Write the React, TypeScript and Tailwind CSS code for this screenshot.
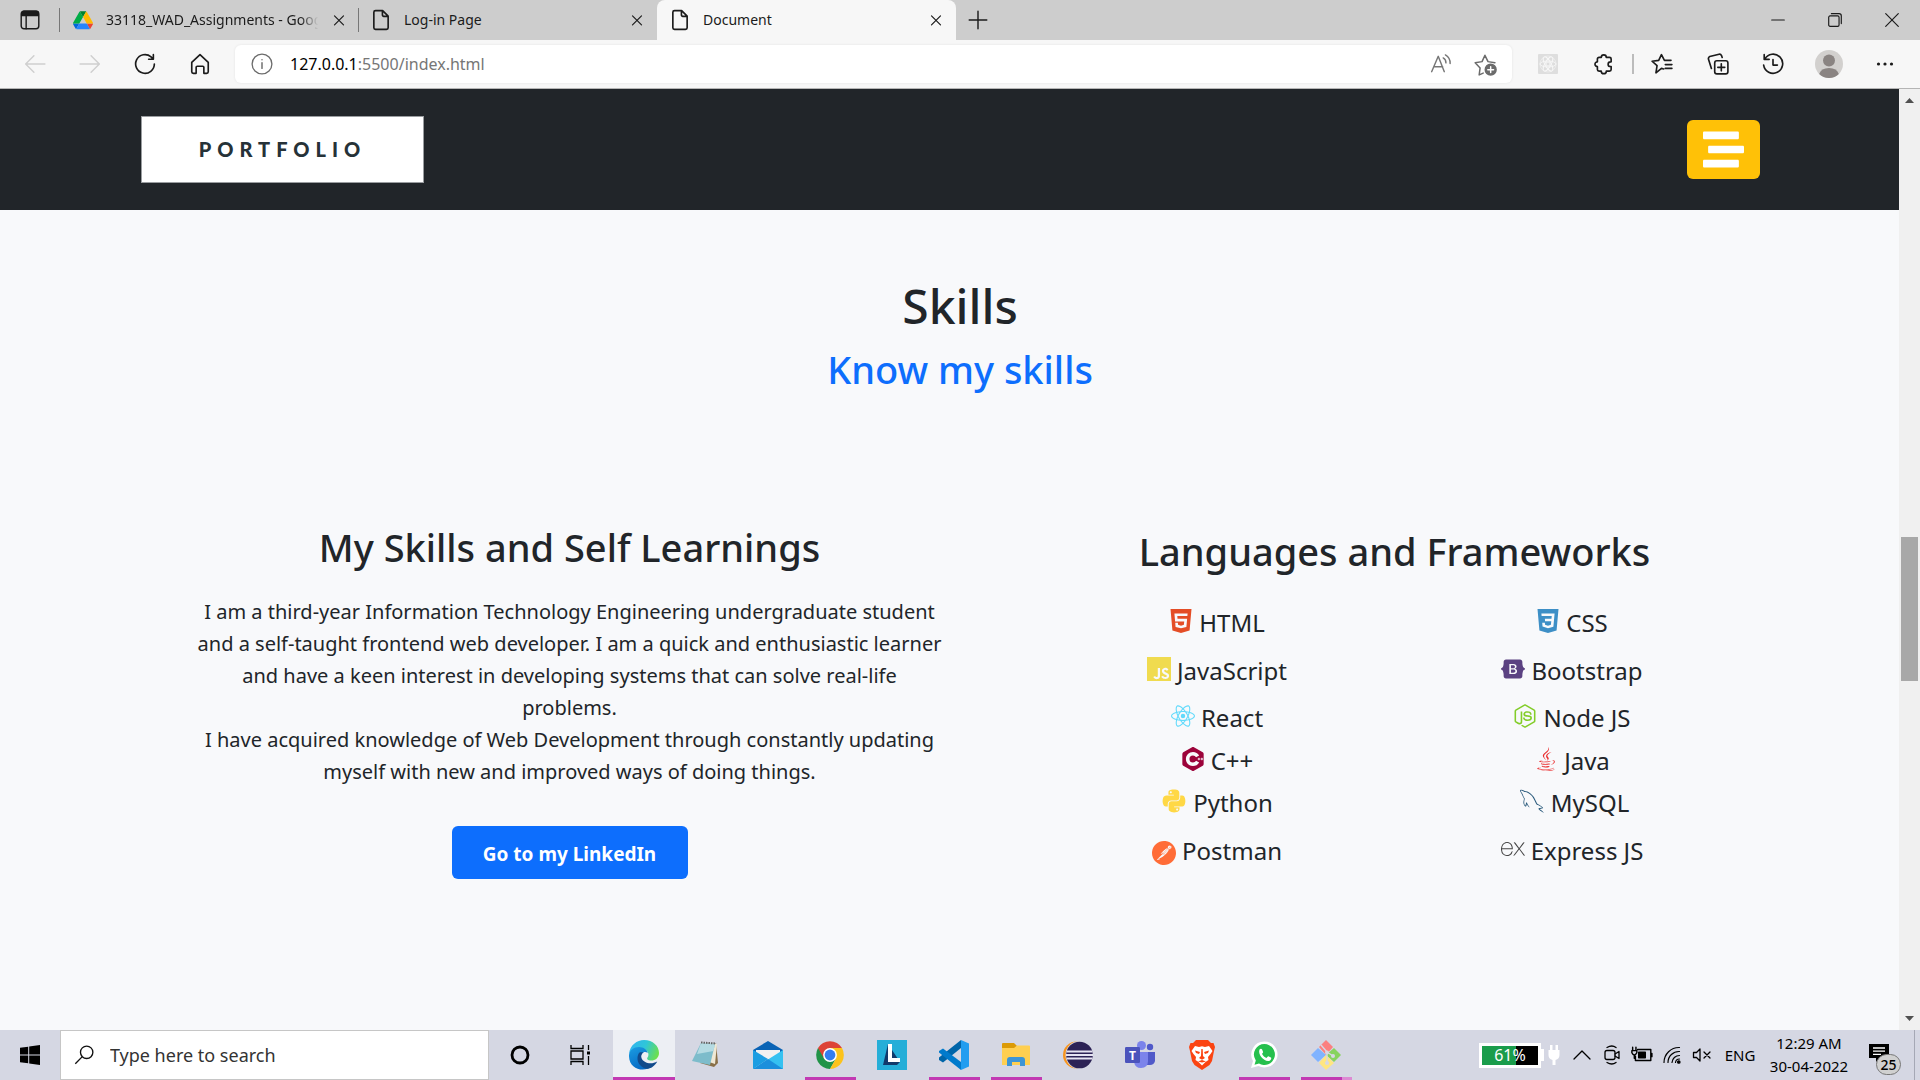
import React from "react";
import { FaNodeJs, FaJava, FaPython, FaStream } from "react-icons/fa";
import { SiHtml5, SiJavascript, SiReact, SiBootstrap, SiCplusplus, SiPostman, SiExpress } from "react-icons/si";
import { DiMysql } from "react-icons/di";

type IconProps = { size?: number; color?: string; children?: React.ReactNode };

/** Outline icon on a 20 unit grid. */
function Line({ size = 20, color = "#1b1b1b", children }: IconProps) {
  return (
    <svg width={size} height={size} viewBox="0 0 20 20" fill="none" stroke={color} strokeWidth="1.3" strokeLinecap="round" strokeLinejoin="round" aria-hidden="true">
      {children}
    </svg>
  );
}

const CloseIcon = ({ size = 20 }: { size?: number }) => (
  <Line size={size}>
    <path d="M5 5.5l10 10M15 5.5l-10 10" />
  </Line>
);

const PageIcon = () => (
  <Line size={22}>
    <path d="M5 1.5h6.5l5 5V17a1.5 1.5 0 0 1-1.5 1.5H5A1.5 1.5 0 0 1 3.500 17V3A1.500 1.500 0 0 1 5 1.500zM11.300 1.700V5.500a1.200 1.200 0 0 0 1.200 1.200h3.800" strokeWidth="1.5" />
  </Line>
);

const DriveIcon = () => (
  <svg width="20" height="20" viewBox="0 0 87 80" aria-hidden="true">
    <path fill="#0066da" d="M6.600 68.850l3.850 6.650c.8 1.400 1.950 2.500 3.300 3.300l13.750-23.800H0c0 1.550.4 3.100 1.200 4.500z" />
    <path fill="#00ac47" d="M43.650 27L29.900 3.200c-1.350.8-2.500 1.900-3.300 3.300L1.200 50.500C.4 51.900 0 53.450 0 55h27.500z" />
    <path fill="#ea4335" d="M73.550 78.800c1.350-.8 2.500-1.900 3.300-3.300l1.600-2.750 7.650-13.250c.8-1.400 1.200-2.950 1.200-4.500H59.800l5.850 11.500z" />
    <path fill="#00832d" d="M43.650 27L57.400 3.200C56.050 2.400 54.500 2 52.900 2H34.400c-1.600 0-3.150.45-4.500 1.200z" />
    <path fill="#2684fc" d="M59.800 55H27.500L13.750 78.800c1.350.8 2.900 1.200 4.500 1.200h50.800c1.600 0 3.150-.45 4.500-1.200z" />
    <path fill="#ffba00" d="M73.400 28.500L60.700 6.500c-.8-1.400-1.950-2.500-3.300-3.300L43.650 27l16.150 28h27.450c0-1.550-.4-3.100-1.200-4.500z" />
  </svg>
);

function Tab({ icon, title, active, fade }: { icon: React.ReactNode; title: string; active?: boolean; fade?: boolean }) {
  return (
    <div
      className={
        active
          ? "flex h-10 w-[299px] items-center rounded-t-lg bg-[#f7f7f7] pl-3 pr-2"
          : "flex h-10 w-[299px] items-center pl-3 pr-2"
      }
    >
      <span className="flex w-[22px] justify-center">{icon}</span>
      <span
        className={
          fade
            ? "ml-3 flex-1 whitespace-nowrap text-sm text-[#1b1b1b] [mask-image:linear-gradient(to_right,black_88%,transparent_96%)]"
            : "ml-3 flex-1 whitespace-nowrap text-sm text-[#1b1b1b]"
        }
      >
        {title}
      </span>
      <button aria-label={`Close ${title}`} className="flex h-6 w-6 items-center justify-center">
        <CloseIcon size={18} />
      </button>
    </div>
  );
}

function TabBar() {
  return (
    <div className="flex h-10 items-center bg-[#cdcdcd]">
      <button aria-label="Tab actions" className="flex h-10 w-[59px] items-center justify-center">
        <Line size={22}>
          <rect x="2" y="2" width="16" height="16" rx="2.500" />
          <path d="M2.500 5V4a2 2 0 0 1 2-2h11a2 2 0 0 1 2 2v2h-15z" fill="#1b1b1b" />
          <path d="M6.500 6v12" />
        </Line>
      </button>
      <span className="h-6 w-px bg-[#777]" />
      <Tab icon={<DriveIcon />} title="33118_WAD_Assignments - Goog" fade />
      <span className="-mx-px h-6 w-px bg-[#777]" />
      <Tab icon={<PageIcon />} title="Log-in Page" />
      <Tab icon={<PageIcon />} title="Document" active />
      <button aria-label="New tab" className="flex h-10 w-11 items-center justify-center">
        <Line size={22}>
          <path d="M10 2v16M2 10h16" />
        </Line>
      </button>
      <div className="ml-auto flex">
        <button aria-label="Minimize" className="flex h-10 w-[57px] items-center justify-center">
          <Line size={18}><path d="M3 10h14" /></Line>
        </button>
        <button aria-label="Restore" className="flex h-10 w-[57px] items-center justify-center">
          <Line size={18}>
            <rect x="3" y="5.500" width="11.500" height="11.500" rx="1.500" />
            <path d="M6 3h8.500A2.500 2.500 0 0 1 17 5.500V14" />
          </Line>
        </button>
        <button aria-label="Close" className="flex h-10 w-[57px] items-center justify-center">
          <Line size={18}><path d="M3 3l14 14M17 3L3 17" /></Line>
        </button>
      </div>
    </div>
  );
}

function ToolButton({ label, wide, children }: { label: string; wide?: boolean; children: React.ReactNode }) {
  return (
    <button
      aria-label={label}
      className={wide ? "flex h-10 w-14 shrink-0 items-center justify-center" : "flex h-10 w-[55px] shrink-0 items-center justify-center"}
    >
      {children}
    </button>
  );
}

function Toolbar() {
  return (
    <div className="flex h-[49px] items-center border-b border-[#b5b5b5] bg-[#f7f7f7] px-[7px]">
      <ToolButton label="Back">
        <Line size={22} color="#cfcfcf"><path d="M19 10H2M9 2.500L1.500 10 9 17.500" /></Line>
      </ToolButton>
      <ToolButton label="Forward">
        <Line size={22} color="#cfcfcf"><path d="M1 10h17M11 2.500l7.500 7.500L11 17.500" /></Line>
      </ToolButton>
      <ToolButton label="Refresh">
        <Line size={22}><path d="M18.500 10A8.500 8.500 0 1 1 15.500 3.500L17.500 5.500M17.600 1.500v4.200h-4.300" strokeWidth="1.500" /></Line>
      </ToolButton>
      <ToolButton label="Home">
        <Line size={22}><path d="M2.500 8.500L10 1.500l7.500 7v8.500a1.500 1.500 0 0 1-1.500 1.500h-2.500v-5.500a1 1 0 0 0-1-1h-5a1 1 0 0 0-1 1v5.500H4A1.500 1.500 0 0 1 2.500 17z" strokeWidth="1.500" transform="translate(0 0)" /></Line>
      </ToolButton>
      <div className="ml-2 flex h-[38px] flex-1 items-center rounded-md bg-white pl-4 shadow-[0_0_3px_rgba(0,0,0,0.08)]">
        <Line size={22} color="#6b6b6b">
          <circle cx="10" cy="10" r="9" strokeWidth="1.200" />
          <path d="M10 8.800v5.200M10 6v.2" />
        </Line>
        <a href="#" className="ml-[17px] flex-1 text-base text-[#767676]">
          <span className="text-black">127.0.0.1</span>:5500/index.html
        </a>
        <button aria-label="Read aloud" className="flex w-[45px] items-center justify-center">
          <Line size={22} color="#767676">
            <path d="M1.500 17L7.500 3l5.500 14M3.500 12.500h8M12 4.500q2.500 1.500 2.500 4.500M14 1.800q4.500 2.700 4.300 7.800" />
          </Line>
        </button>
        <button aria-label="Add to favorites" className="mr-1 flex w-[45px] items-center justify-center">
          <Line size={23} color="#6b6b6b">
            <path d="M8 17.500l-3.500 1.500.8-6L1 8.500l6-1L9.500 2l2.700 5.500 6 .9" />
            <circle cx="14.500" cy="14.500" r="4.700" fill="#6b6b6b" />
            <path d="M14.500 12v5M12 14.500h5" stroke="#fff" />
          </Line>
        </button>
      </div>
      <div className="ml-2 flex items-center">
        <ToolButton label="React developer tools" wide>
          <svg width="20" height="20" viewBox="0 0 20 20" aria-hidden="true">
            <rect width="20" height="20" rx="1" fill="#dedede" />
            <g fill="none" stroke="#f7f7f7" strokeWidth="0.900">
              <ellipse cx="10" cy="10" rx="8" ry="3" />
              <ellipse cx="10" cy="10" rx="8" ry="3" transform="rotate(60 10 10)" />
              <ellipse cx="10" cy="10" rx="8" ry="3" transform="rotate(120 10 10)" />
              <circle cx="10" cy="10" r="2" />
              <circle cx="10" cy="10" r="8" strokeWidth="0.500" />
            </g>
          </svg>
        </ToolButton>
        <ToolButton label="Extensions" wide>
          <Line size={22}>
            <path d="M7.500 4a2.300 2.300 0 0 1 4.600 0H15a1.500 1.500 0 0 1 1.500 1.500V8h-.6a2.100 2.100 0 1 0 0 4.300h.6V15a1.500 1.500 0 0 1-1.500 1.500h-2.900a2.300 2.300 0 0 1-4.600 0H5.500A1.500 1.500 0 0 1 4 15v-2.600a2.200 2.200 0 1 1 0-4.400V5.500A1.500 1.500 0 0 1 5.500 4z" strokeWidth="1.500" />
          </Line>
        </ToolButton>
        <span className="h-5 w-0.5 bg-[#bcbcbc]" />
        <ToolButton label="Favorites" wide>
          <Line size={22}>
            <path d="M11.500 14.500L9.500 14 4.500 18l1-6.500L1 7.500l6-.8L9.500 1.500l2.700 5.200h6M13 10.500h6M13 14h6" strokeWidth="1.500" />
          </Line>
        </ToolButton>
        <ToolButton label="Collections">
          <Line size={22}>
            <rect x="7" y="7" width="12" height="12" rx="2" strokeWidth="1.500" />
            <path d="M13 9.800v6.400M9.800 13h6.400M4 14L1.300 5.500Q1 4 2.500 3.200L11 1.100q1.500-.3 2.200 1.200l.6 1.800" strokeWidth="1.500" />
          </Line>
        </ToolButton>
        <ToolButton label="History" wide>
          <Line size={22}>
            <path d="M2.500 5.500A8.700 8.700 0 1 1 1.500 11M2 1.500v4.300h4.500M10 6v5h4" strokeWidth="1.500" />
          </Line>
        </ToolButton>
        <ToolButton label="Profile" wide>
          <svg width="28" height="28" viewBox="0 0 28 28" aria-hidden="true">
            <circle cx="14" cy="14" r="14" fill="#d2d0ce" />
            <circle cx="14" cy="10.500" r="6" fill="#8a8482" />
            <path d="M4.200 24Q6 18 14 18t9.800 6A14 14 0 0 1 4.200 24z" fill="#8a8482" />
          </svg>
        </ToolButton>
        <ToolButton label="Settings and more" wide>
          <svg width="18" height="18" viewBox="0 0 18 18" fill="#1b1b1b" aria-hidden="true">
            <circle cx="2.500" cy="9" r="1.600" /><circle cx="9" cy="9" r="1.600" /><circle cx="15.500" cy="9" r="1.600" />
          </svg>
        </ToolButton>
      </div>
    </div>
  );
}

const Css3Icon = () => (
  <svg width="24" height="24" viewBox="0 0 24 24" fill="#3d8fc6" aria-hidden="true">
    <path d="M1.500 0h21l-1.910 21.563L11.977 24l-8.565-2.438L1.500 0zm17.090 4.413L5.410 4.410l.213 2.622 10.125.002-.255 2.716h-6.640l.24 2.573h6.182l-.366 3.523-2.910.804-2.956-.81-.188-2.110h-2.610l.29 3.855L12 19.288l5.373-1.530L18.590 4.414z" />
  </svg>
);

type Skill = { name: string; icon: React.ReactNode };

const rows: { height: string; skills: [Skill, Skill] }[] = [
  { height: "h-12", skills: [
    { name: "HTML", icon: <SiHtml5 size={24} color="#e44d26" /> },
    { name: "CSS", icon: <Css3Icon /> },
  ] },
  { height: "h-12", skills: [
    { name: "JavaScript", icon: <SiJavascript size={24} color="#f0db4f" /> },
    { name: "Bootstrap", icon: <SiBootstrap size={24} color="#5b4282" /> },
  ] },
  { height: "h-[46px]", skills: [
    { name: "React", icon: <SiReact size={24} color="#61dafb" /> },
    { name: "Node JS", icon: <FaNodeJs size={24} color="#83cd29" /> },
  ] },
  { height: "h-10", skills: [
    { name: "C++", icon: <SiCplusplus size={24} color="#9c033a" /> },
    { name: "Java", icon: <FaJava size={24} color="#ea2d2e" /> },
  ] },
  { height: "h-11", skills: [
    { name: "Python", icon: <FaPython size={26} color="#ffd845" /> },
    { name: "MySQL", icon: <DiMysql size={34} color="#2a5a7c" className="-mr-1" /> },
  ] },
  { height: "h-[52px]", skills: [
    { name: "Postman", icon: <SiPostman size={24} color="#ff6c37" className="mt-2" /> },
    { name: "Express JS", icon: <SiExpress size={24} color="#444" /> },
  ] },
];

function Portfolio() {
  return (
    <div className="flex flex-1 flex-col bg-[#f8f9fb] text-[#212529]">
      <header className="flex h-[121px] items-center justify-between bg-[#212529] pl-[141px] pr-[139px]">
        <a href="#" className="flex h-[67px] w-[283px] items-center justify-center border border-[#9a9da0] bg-white pb-0.5 font-['Lato',sans-serif] text-xl font-black tracking-[6px] text-[#263238]">
          PORTFOLIO
        </a>
        <button aria-label="Menu" className="flex h-[59px] w-[73px] items-center justify-center rounded-md bg-[#ffc107]">
          <FaStream size={41} color="#fff" />
        </button>
      </header>
      <main className="flex-1">
        <div className="pl-[21px] pt-[66px] text-center">
          <h1 className="text-5xl font-medium leading-[60px]">Skills</h1>
          <h2 className="mt-2 text-[38px] font-medium leading-[50px] text-[#0d6efd]">Know my skills</h2>
        </div>
        <div className="grid grid-cols-2 pl-[157px] pr-[92px] pt-[127px] text-center">
          <section className="flex flex-col items-center">
            <h3 className="text-[38px] font-medium leading-[52px]">My Skills and Self Learnings</h3>
            <p className="mt-[23px] max-w-[750px] text-xl leading-8">
              I am a third-year Information Technology Engineering undergraduate student
              and a self-taught frontend web developer. I am a quick and enthusiastic learner
              and have a keen interest in developing systems that can solve real-life problems.
              <br />
              I have acquired knowledge of Web Development through constantly updating
              myself with new and improved ways of doing things.
            </p>
            <a href="#" className="mt-[38px] flex h-[53px] w-[236px] items-center justify-center rounded-md bg-[#0d6efd] pt-1 text-[19px] font-bold text-white">
              Go to my LinkedIn
            </a>
          </section>
          <section className="mx-auto w-[710px] max-w-full pt-1">
            <h3 className="text-[38px] font-medium leading-[52px]">Languages and Frameworks</h3>
            <div className="mt-[22px]">
              {rows.map((row) => (
                <div key={row.skills[0].name} className="grid grid-cols-2">
                  {row.skills.map((skill) => (
                    <div key={skill.name} className={`flex items-center justify-center gap-1.5 text-2xl ${row.height}`}>
                      <span className="flex pb-1">{skill.icon}</span>
                      {skill.name}
                    </div>
                  ))}
                </div>
              ))}
            </div>
          </section>
        </div>
      </main>
    </div>
  );
}

function ScrollBar() {
  return (
    <div className="flex w-[21px] shrink-0 flex-col items-center bg-[#f0f0f0]">
      <svg width="21" height="24" viewBox="0 0 21 24" aria-hidden="true"><path d="M6 14l4.500-5 4.500 5z" fill="#505050" /></svg>
      <div className="flex-[424]" />
      <div className="w-[17px] flex-[145] bg-[#a8a8a8]" />
      <div className="flex-[325]" />
      <svg width="21" height="24" viewBox="0 0 21 24" aria-hidden="true"><path d="M6 10l4.500 5 4.500-5z" fill="#505050" /></svg>
    </div>
  );
}

const Glyph = ({ children }: { children: React.ReactNode }) => (
  <svg width="30" height="30" viewBox="0 0 30 30" aria-hidden="true">{children}</svg>
);

const apps: { name: string; running?: boolean; active?: boolean; stacked?: boolean; icon: React.ReactNode }[] = [
  { name: "Microsoft Edge", active: true, icon: (
    <Glyph>
      <defs>
        <linearGradient id="edgeTop" x1="0" y1="0.300" x2="1" y2="0.600"><stop offset="0" stopColor="#30b4f0" /><stop offset="0.500" stopColor="#2fc6d8" /><stop offset="1" stopColor="#6ee04a" /></linearGradient>
        <linearGradient id="edgeLeft" x1="0" y1="0" x2="0.500" y2="1"><stop offset="0" stopColor="#1b9de2" /><stop offset="1" stopColor="#0669c4" /></linearGradient>
      </defs>
      <path d="M0 14C1 5 8 0 15 0c9 0 15 6 15 13 0 5-4 7.500-7.500 7.500-4 0-5-1.500-4-3 2.500-3.500 0-8-5-8.500C8 8.500 2 10 0 14z" fill="url(#edgeTop)" />
      <path d="M0 15c.5-5 5-8 10-8 4.500 0 8.500 3 8.700 6-3-2.500-7.200 0-7.200 5 0 7 7 10 12 8.500C14 33-.500 29 0 15z" fill="url(#edgeLeft)" />
      <path d="M10.500 12.500C8 15 7.500 21 11 25c3.500 4 9 5 13 1.500 2-1.500 3.500-3.500 4.200-5-6 3.500-14 1.500-15.700-3.500-.7-2 .0-4.500 2-5.500-1.500-.3-3-.3-4 0z" fill="#114a8b" />
    </Glyph>
  ) },
  { name: "Notepad", icon: (
    <Glyph>
      <path d="M25 3l2 20-4 4-14-4z" fill="#8a7048" />
      <path d="M11 3l15 1-2 20-9-3z" fill="#efe8d5" />
      <path d="M10 3l14 1-5 21L1 21z" fill="#7dbccb" />
      <path d="M10 3l14 1-1.500 7L6 14z" fill="#b5dbe3" />
      <path d="M10 2.500l15 1" stroke="#666" strokeWidth="2" strokeDasharray="1.500 1" />
    </Glyph>
  ) },
  { name: "Mail", icon: (
    <Glyph>
      <path d="M0 10L15 1l15 9v3H0z" fill="#0a63b5" />
      <path d="M3 10h24v10H3z" fill="#f1f1f1" />
      <path d="M0 10l15 9L0 29z" fill="#1b9de2" />
      <path d="M30 10L0 29h30z" fill="#35c1f1" />
      <path d="M0 29l15-10 15 10z" fill="#1b8fdc" />
    </Glyph>
  ) },
  { name: "Google Chrome", running: true, icon: (
    <Glyph>
      <path d="M15 15L3 8.100A13.900 13.900 0 0 0 15 28.900l6-10.400z" fill="#219348" />
      <path d="M15 8.100h12A13.900 13.900 0 0 1 15 28.900l6-10.400z" fill="#fcc31c" />
      <path d="M3 8.100L9 18.500 15 8.100h12A13.900 13.900 0 0 0 3 8.100z" fill="#dd4236" />
      <circle cx="15" cy="15" r="6.900" fill="#fff" />
      <circle cx="15" cy="15" r="5.400" fill="#347df0" />
    </Glyph>
  ) },
  { name: "Lightshot", icon: (
    <Glyph>
      <path d="M0 0h30v30H0z" fill="#25aed8" />
      <path d="M11 4L6 25h14l3-3z" fill="#123a6b" />
      <path d="M11 4h4v14h8v4H11z" fill="#fff" />
    </Glyph>
  ) },
  { name: "Visual Studio Code", running: true, icon: (
    <Glyph>
      <path d="M22 0v8L4 22.500 0 20v-2.500z" fill="#0065a9" />
      <path d="M0 11l4-2.500L22 22v8L0 12.500z" fill="#007acc" />
      <path d="M22 0l8 3.500v23L22 30V0z" fill="#229df0" />
    </Glyph>
  ) },
  { name: "File Explorer", running: true, icon: (
    <Glyph>
      <path d="M1 4q0-1 1-1h11l3 3v5H1z" fill="#dc9a05" />
      <path d="M1 8h12l3-2.500h12q1 0 1 1V25H1z" fill="#ffcf51" />
      <path d="M6 26v-6q0-3 3-3h12q3 0 3 3v6h-5v-4h-8v4z" fill="#3d95d5" />
    </Glyph>
  ) },
  { name: "Eclipse", icon: (
    <Glyph>
      <circle cx="13.500" cy="15" r="13.500" fill="#f7941e" />
      <circle cx="16.500" cy="15" r="14" fill="#d6d8e4" />
      <circle cx="16.500" cy="15" r="13.300" fill="#2c2255" />
      <path d="M3.500 11.500h26M3 15h27M3.500 18.500h26" stroke="#e6e4f2" strokeWidth="1.900" />
    </Glyph>
  ) },
  { name: "Microsoft Teams", icon: (
    <Glyph>
      <circle cx="16.500" cy="5.500" r="4.500" fill="#7b83eb" />
      <circle cx="25" cy="7" r="3.200" fill="#5059c9" />
      <path d="M21 12h9v9q-1 4-5 4h-4z" fill="#5059c9" />
      <path d="M10 12h13v9q0 7-7 7-6 0-7-6z" fill="#7b83eb" />
      <rect x="0" y="7" width="15" height="16" rx="1.200" fill="#4b53bc" />
      <text x="7.500" y="19.500" textAnchor="middle" fontSize="12" fontWeight="700" fill="#fff">T</text>
    </Glyph>
  ) },
  { name: "Brave", icon: (
    <Glyph>
      <path d="M9 0h12l3 3 2.500 0 1.500 4-1 4-2 10-2.500 4L15 30l-7.500-5L5 21 3 11 2 7l1.500-4H6z" fill="#fb4412" />
      <path d="M8 6l4 1 3-.8 3 .8 4-1 3.500 5-2 3-2.500 3 .5 3-3 2-3.500 3.500L11.500 22l-3-2 .5-3-2.500-3-2-3z" fill="#fff" />
      <path d="M8 10.500l5 1.500-1 2-3-1zM22 10.500L17 12l1 2 3-1zM14.300 9h1.400l.3 7 2 2-3 1.700-3-1.700 2-2zM11 21.500l4-1.500 4 1.500-4 1z" fill="#fb4412" />
    </Glyph>
  ) },
  { name: "WhatsApp", running: true, icon: (
    <Glyph>
      <path d="M15.500 1.500A13 13 0 1 1 9.500 26L2 28l2-7A13 13 0 0 1 15.500 1.500z" fill="#fff" />
      <path d="M15.500 4A10.500 10.500 0 1 1 10 23.500L5.500 24.700l1.300-4.300A10.500 10.500 0 0 1 15.500 4z" fill="#26c04e" />
      <path d="M10.500 9.500c1-1.300 2.200-1 2.600 0l1 2.400c.2.600-1 1.500-1 2 1 2 2.500 3.300 4.300 4 .7 0 1.300-1.700 2-1.600l2.500 1.200c.8.500.2 2.500-1.200 3.200-5 2-12.300-6-10.200-11.200z" fill="#fff" />
    </Glyph>
  ) },
  { name: "Git Bash", stacked: true, icon: (
    <Glyph>
      <path d="M15 0l7 7-7 8-7-8z" fill="#fb8080" />
      <path d="M7 8l8 7-8 7-7-7z" fill="#80b3ff" />
      <path d="M23 8l7 7-7 7-8-7z" fill="#87d35f" />
      <path d="M15 15l8 8-8 7-7-7z" fill="#ffe680" />
      <path d="M10 5l6 7v12M16 12l6 4" stroke="#d6d8e4" strokeWidth="1.400" fill="none" />
      <circle cx="16" cy="12.500" r="2" fill="#d6d8e4" /><circle cx="22" cy="16" r="2" fill="#d6d8e4" /><circle cx="16" cy="23" r="2" fill="#d6d8e4" />
    </Glyph>
  ) },
];

function Taskbar() {
  return (
    <footer className="flex h-[50px] items-stretch bg-[#d5d7e3] text-black">
      <button aria-label="Start" className="flex w-[60px] items-center justify-center">
        <svg width="20" height="20" viewBox="0 0 20 20" aria-hidden="true"><path d="M0 2.800L8.200 1.700v7.800H0zM9.200 1.500L20 0v9.500H9.200zM0 10.500h8.200v7.800L0 17.200zM9.200 10.500H20V20L9.200 18.500z" /></svg>
      </button>
      <label className="flex w-[429px] items-center border border-[#c6c6c6] bg-white pl-3">
        <svg width="24" height="24" viewBox="0 0 24 24" fill="none" stroke="#111" strokeWidth="1.500" aria-hidden="true"><circle cx="15" cy="9" r="6.800" /><path d="M10.200 13.800L2.500 21.500" /></svg>
        <input aria-label="Search" placeholder="Type here to search" className="ml-[15px] w-full bg-transparent text-lg outline-none placeholder:text-[#333]" />
      </label>
      <button aria-label="Cortana" className="flex w-[62px] items-center justify-center">
        <svg width="20" height="20" viewBox="0 0 20 20" fill="none" stroke="#000" strokeWidth="2.800" aria-hidden="true"><circle cx="10" cy="10" r="8" /></svg>
      </button>
      <button aria-label="Task view" className="flex w-[62px] items-center justify-center pr-1">
        <svg width="22" height="22" viewBox="0 0 22 22" fill="none" stroke="#000" strokeWidth="1.300" aria-hidden="true">
          <path d="M2 1v3.500h12V1M2 21v-3.500h12V21M2 7h12v8H2zM19.500 1v5M19.500 12v9" /><path d="M18 7.500h3v3h-3z" fill="#000" stroke="none" />
        </svg>
      </button>
      <nav className="flex" aria-label="Apps">
        {apps.map((app) => (
          <button
            key={app.name}
            aria-label={app.name}
            className={app.active ? "flex w-[62px] flex-col items-center bg-[#edeff4]" : "flex w-[62px] flex-col items-center"}
          >
            <span className="flex flex-1 items-center pt-[3px]">{app.icon}</span>
            <span
              className={
                app.active
                  ? "h-[3px] w-full bg-[#c239b3]"
                  : app.stacked
                    ? "h-[3px] w-[51px] border-r-[10px] border-[#dd8ad3] bg-[#c239b3]"
                    : app.running
                      ? "h-[3px] w-[51px] bg-[#c239b3]"
                      : "h-[3px] w-[51px]"
              }
            />
          </button>
        ))}
      </nav>
      <div className="ml-auto flex items-center">
        <div className="flex h-[25px] w-[62px] items-center justify-center border-[3px] border-white bg-[linear-gradient(to_right,#1a9c4b_61%,#000_61%)] text-base leading-none text-white">61%</div>
        <span className="h-3 w-[3px] bg-white" />
        <svg className="ml-1" width="12" height="20" viewBox="0 0 12 20" fill="#fff" aria-hidden="true"><path d="M2 0h2.500v5h3V0H10v5h1.500v5q0 4-4 5v5h-3v-5q-4-1-4-5V5H2z" /></svg>
        <div className="ml-2 flex items-center">
          <button aria-label="Show hidden icons" className="flex w-7 justify-center"><Line size={20} color="#000"><path d="M2 14l8-8 8 8" /></Line></button>
          <button aria-label="Meet now" className="flex w-8 justify-center">
            <Line size={20} color="#000"><rect x="3" y="5.500" width="10" height="9" rx="2" /><path d="M13 9l4-2.500v7L13 11M5 2.500q5-3 9 0M5 17.500q5 3 9 0" /></Line>
          </button>
          <button aria-label="Battery" className="flex w-7 justify-center">
            <Line size={22} color="#000"><path d="M6 5h12v10H4v-4M19 8.500v3M1.500 3v3M4.500 3v3M.8 6h4.500v2q-1 2-2.300 2T.8 8zM3 10v3" /><path d="M7 7.500h6v5H7z" fill="#000" /></Line>
          </button>
          <button aria-label="Network" className="flex w-8 justify-center">
            <Line size={20} color="#000"><path d="M2 17.500A15 15 0 0 1 17.500 2.500M6 17.500A11 11 0 0 1 17.500 6.500M10 17.500a7.500 7.500 0 0 1 7.500-7M13.500 17.500a4 4 0 0 1 4-3.500" strokeWidth="1.200" /><circle cx="16.800" cy="17" r="1.200" fill="#000" /></Line>
          </button>
          <button aria-label="Volume" className="flex w-7 justify-center">
            <Line size={20} color="#000"><path d="M1.500 7.500h3L8 4v12l-3.500-3.500h-3zM12 7l6 6M18 7l-6 6" /></Line>
          </button>
        </div>
        <span className="w-12 text-center text-[15px]">ENG</span>
        <div className="w-[90px] text-center text-[15px] leading-[23px]">
          <div className="whitespace-nowrap">12:29 AM</div>
          <div className="whitespace-nowrap">30-04-2022</div>
        </div>
        <button aria-label="Notifications" className="relative ml-[15px] flex h-[50px] w-[46px] items-center border-r border-[#a5a8b5]">
          <svg className="mb-1" width="20" height="20" viewBox="0 0 20 20" aria-hidden="true"><path d="M0 1h20v14h-9l-4 4v-4H0z" /><path d="M4 5h12M4 8.200h12M4 11.400h8" stroke="#fff" strokeWidth="1.300" /></svg>
          <span className="absolute left-[7px] top-[24px] flex h-[21px] w-[25px] items-center justify-center rounded-full border border-[#777] bg-[#d0d0d0] text-sm font-medium leading-none">25</span>
        </button>
        <span className="w-[5px]" />
      </div>
    </footer>
  );
}

export default function App() {
  return (
    <div className="flex min-h-screen flex-col font-['Noto_Sans','Open_Sans',sans-serif]">
      <TabBar />
      <Toolbar />
      <div className="flex flex-1">
        <Portfolio />
        <ScrollBar />
      </div>
      <Taskbar />
    </div>
  );
}
